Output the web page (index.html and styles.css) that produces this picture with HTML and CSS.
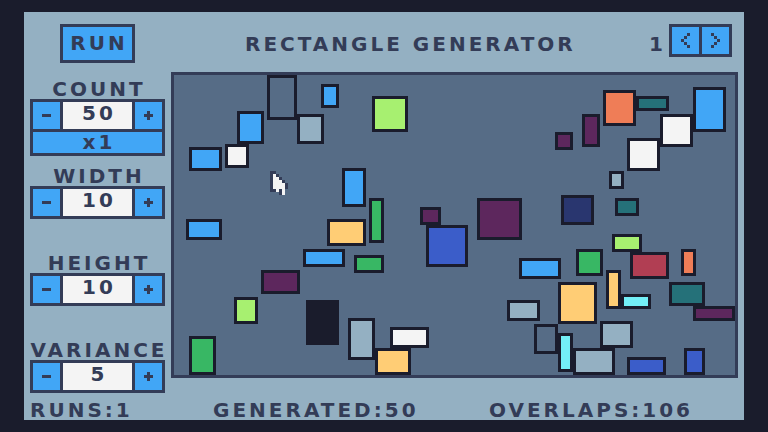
FILE: index.html
```html
<!DOCTYPE html>
<html lang="en">
<head>
<meta charset="utf-8">
<title>Rectangle Generator</title>
<link rel="stylesheet" href="styles.css">
</head>
<body>
<div class="screen">
  <header class="header">
    <button class="run">RUN</button>
    <h1 class="title">RECTANGLE GENERATOR</h1>
    <span class="page">1</span>
    <div class="nav">
      <button class="navbtn" aria-label="Previous">
        <svg width="9" height="15" viewBox="0 0 9 15" shape-rendering="crispEdges"><g fill="#333c57"><rect x="6" y="0" width="3" height="3"/><rect x="3" y="3" width="3" height="3"/><rect x="0" y="6" width="3" height="3"/><rect x="3" y="9" width="3" height="3"/><rect x="6" y="12" width="3" height="3"/></g></svg>
      </button>
      <button class="navbtn" aria-label="Next">
        <svg width="9" height="15" viewBox="0 0 9 15" shape-rendering="crispEdges"><g fill="#333c57"><rect x="0" y="0" width="3" height="3"/><rect x="3" y="3" width="3" height="3"/><rect x="6" y="6" width="3" height="3"/><rect x="3" y="9" width="3" height="3"/><rect x="0" y="12" width="3" height="3"/></g></svg>
      </button>
    </div>
  </header>

  <div class="main">
    <aside class="controls">
      <div class="group">
        <div class="label">COUNT</div>
        <div class="stepper">
          <button class="btn" aria-label="Decrease"><svg width="9" height="9" viewBox="0 0 9 9" shape-rendering="crispEdges"><rect x="0" y="3" width="9" height="3" fill="#333c57"/></svg></button>
          <div class="val">50</div>
          <button class="btn" aria-label="Increase"><svg width="9" height="9" viewBox="0 0 9 9" shape-rendering="crispEdges"><g fill="#333c57"><rect x="0" y="3" width="9" height="3"/><rect x="3" y="0" width="3" height="9"/></g></svg></button>
          <button class="mult">x1</button>
        </div>
      </div>
      <div class="group">
        <div class="label">WIDTH</div>
        <div class="stepper">
          <button class="btn" aria-label="Decrease"><svg width="9" height="9" viewBox="0 0 9 9" shape-rendering="crispEdges"><rect x="0" y="3" width="9" height="3" fill="#333c57"/></svg></button>
          <div class="val">10</div>
          <button class="btn" aria-label="Increase"><svg width="9" height="9" viewBox="0 0 9 9" shape-rendering="crispEdges"><g fill="#333c57"><rect x="0" y="3" width="9" height="3"/><rect x="3" y="0" width="3" height="9"/></g></svg></button>
        </div>
      </div>
      <div class="group">
        <div class="label">HEIGHT</div>
        <div class="stepper">
          <button class="btn" aria-label="Decrease"><svg width="9" height="9" viewBox="0 0 9 9" shape-rendering="crispEdges"><rect x="0" y="3" width="9" height="3" fill="#333c57"/></svg></button>
          <div class="val">10</div>
          <button class="btn" aria-label="Increase"><svg width="9" height="9" viewBox="0 0 9 9" shape-rendering="crispEdges"><g fill="#333c57"><rect x="0" y="3" width="9" height="3"/><rect x="3" y="0" width="3" height="9"/></g></svg></button>
        </div>
      </div>
      <div class="group">
        <div class="label">VARIANCE</div>
        <div class="stepper">
          <button class="btn" aria-label="Decrease"><svg width="9" height="9" viewBox="0 0 9 9" shape-rendering="crispEdges"><rect x="0" y="3" width="9" height="3" fill="#333c57"/></svg></button>
          <div class="val">5</div>
          <button class="btn" aria-label="Increase"><svg width="9" height="9" viewBox="0 0 9 9" shape-rendering="crispEdges"><g fill="#333c57"><rect x="0" y="3" width="9" height="3"/><rect x="3" y="0" width="3" height="9"/></g></svg></button>
        </div>
      </div>
    </aside>

    <section class="canvas">
      <div class="r c-gray" style="left:93px;top:0px;width:30px;height:45px"></div>
      <div class="r c-sky" style="left:147px;top:9px;width:18px;height:24px"></div>
      <div class="r c-silver" style="left:123px;top:39px;width:27px;height:30px"></div>
      <div class="r c-lime" style="left:198px;top:21px;width:36px;height:36px"></div>
      <div class="r c-sky" style="left:63px;top:36px;width:27px;height:33px"></div>
      <div class="r c-white" style="left:51px;top:69px;width:24px;height:24px"></div>
      <div class="r c-sky" style="left:15px;top:72px;width:33px;height:24px"></div>
      <div class="r c-sky" style="left:168px;top:93px;width:24px;height:39px"></div>
      <div class="r c-sky" style="left:12px;top:144px;width:36px;height:21px"></div>
      <div class="r c-yellow" style="left:153px;top:144px;width:39px;height:27px"></div>
      <div class="r c-sky" style="left:129px;top:174px;width:42px;height:18px"></div>
      <div class="r c-green" style="left:180px;top:180px;width:30px;height:18px"></div>
      <div class="r c-purple" style="left:87px;top:195px;width:39px;height:24px"></div>
      <div class="r c-lime" style="left:60px;top:222px;width:24px;height:27px"></div>
      <div class="r c-green" style="left:195px;top:123px;width:15px;height:45px"></div>
      <div class="r c-purple" style="left:246px;top:132px;width:21px;height:18px"></div>
      <div class="r c-blue" style="left:252px;top:150px;width:42px;height:42px"></div>
      <div class="r c-purple" style="left:303px;top:123px;width:45px;height:42px"></div>
      <div class="r c-sky" style="left:345px;top:183px;width:42px;height:21px"></div>
      <div class="r c-green" style="left:402px;top:174px;width:27px;height:27px"></div>
      <div class="r c-lime" style="left:438px;top:159px;width:30px;height:18px"></div>
      <div class="r c-red" style="left:456px;top:177px;width:39px;height:27px"></div>
      <div class="r c-orange" style="left:507px;top:174px;width:15px;height:27px"></div>
      <div class="r c-yellow" style="left:432px;top:195px;width:15px;height:39px"></div>
      <div class="r c-cyan" style="left:447px;top:219px;width:30px;height:15px"></div>
      <div class="r c-teal" style="left:495px;top:207px;width:36px;height:24px"></div>
      <div class="r c-purple" style="left:519px;top:231px;width:42px;height:15px"></div>
      <div class="r c-yellow" style="left:384px;top:207px;width:39px;height:42px"></div>
      <div class="r c-silver" style="left:333px;top:225px;width:33px;height:21px"></div>
      <div class="r c-white" style="left:486px;top:39px;width:33px;height:33px"></div>
      <div class="r c-white" style="left:453px;top:63px;width:33px;height:33px"></div>
      <div class="r c-silver" style="left:435px;top:96px;width:15px;height:18px"></div>
      <div class="r c-navy" style="left:387px;top:120px;width:33px;height:30px"></div>
      <div class="r c-teal" style="left:441px;top:123px;width:24px;height:18px"></div>
      <div class="r c-orange" style="left:429px;top:15px;width:33px;height:36px"></div>
      <div class="r c-teal" style="left:462px;top:21px;width:33px;height:15px"></div>
      <div class="r c-sky" style="left:519px;top:12px;width:33px;height:45px"></div>
      <div class="r c-purple" style="left:408px;top:39px;width:18px;height:33px"></div>
      <div class="r c-purple" style="left:381px;top:57px;width:18px;height:18px"></div>
      <div class="r c-gray" style="left:360px;top:249px;width:24px;height:30px"></div>
      <div class="r c-cyan" style="left:384px;top:258px;width:15px;height:39px"></div>
      <div class="r c-silver" style="left:399px;top:273px;width:42px;height:27px"></div>
      <div class="r c-silver" style="left:426px;top:246px;width:33px;height:27px"></div>
      <div class="r c-blue" style="left:453px;top:282px;width:39px;height:18px"></div>
      <div class="r c-blue" style="left:510px;top:273px;width:21px;height:27px"></div>
      <div class="r c-ink" style="left:132px;top:225px;width:33px;height:45px"></div>
      <div class="r c-silver" style="left:174px;top:243px;width:27px;height:42px"></div>
      <div class="r c-white" style="left:216px;top:252px;width:39px;height:21px"></div>
      <div class="r c-yellow" style="left:201px;top:273px;width:36px;height:27px"></div>
      <div class="r c-green" style="left:15px;top:261px;width:27px;height:39px"></div>

      <svg class="cursor" width="18" height="24" viewBox="0 0 6 8" shape-rendering="crispEdges">
        <g fill="#333c57">
          <rect x="0" y="0" width="1" height="7"/>
          <rect x="1" y="0" width="1" height="1"/>
          <rect x="2" y="1" width="1" height="1"/>
          <rect x="3" y="2" width="1" height="1"/>
          <rect x="4" y="3" width="1" height="1"/>
          <rect x="5" y="4" width="1" height="2"/>
          <rect x="1" y="6" width="1" height="1"/>
          <rect x="3" y="6" width="1" height="2"/>
        </g>
        <g fill="#f4f4f4">
          <rect x="1" y="1" width="1" height="5"/>
          <rect x="2" y="2" width="1" height="5"/>
          <rect x="3" y="3" width="1" height="3"/>
          <rect x="4" y="4" width="1" height="4"/>
        </g>
      </svg>
    </section>
  </div>

  <footer class="footer">
    <span>RUNS:1</span>
    <span>GENERATED:50</span>
    <span>OVERLAPS:106</span>
  </footer>
</div>
</body>
</html>
```

FILE: styles.css
```css
* {
  box-sizing: border-box;
  margin: 0;
  padding: 0;
}

html, body {
  width: 768px;
  height: 432px;
  overflow: hidden;
}

body {
  background: #1a1c2c;
  font-family: "DejaVu Sans", "Liberation Sans", sans-serif;
  font-weight: 700;
  font-size: 20px;
  line-height: 20px;
  color: #333c57;
}

button {
  font: inherit;
  color: inherit;
  border: none;
  background: none;
  padding: 0;
}

.screen {
  margin: 12px 24px;
  width: 720px;
  height: 408px;
  background: #94b0c2;
  padding: 0 6px;
  display: flex;
  flex-direction: column;
}

/* header */
.header {
  display: flex;
  align-items: flex-start;
  height: 60px;
  flex: none;
}

.run {
  margin: 12px 0 0 30px;
  width: 75px;
  height: 39px;
  border: 3px solid #333c57;
  background: #41a6f6;
  text-align: center;
  line-height: 33px;
  letter-spacing: 3px;
  padding-left: 3px;
}

.title {
  margin: 22px 0 0 110px;
  font-size: 20px;
  font-weight: 700;
  line-height: 20px;
  letter-spacing: 3px;
  white-space: nowrap;
}

.page {
  margin: 22px 6px 0 auto;
}

.nav {
  margin: 12px 6px 0 0;
  display: flex;
  gap: 3px;
  border: 3px solid #333c57;
  background: #333c57;
}

.navbtn {
  width: 27px;
  height: 27px;
  background: #41a6f6;
  display: flex;
  align-items: center;
  justify-content: center;
}

.navbtn svg,
.btn svg {
  display: block;
}

/* main */
.main {
  display: flex;
  align-items: flex-start;
  flex: none;
}

.controls {
  width: 135px;
  margin-right: 6px;
  padding-top: 7px;
  display: flex;
  flex-direction: column;
  flex: none;
}

.group {
  height: 87px;
  display: flex;
  flex-direction: column;
  align-items: center;
}

.group:last-child {
  height: auto;
}

.label {
  letter-spacing: 3px;
  padding-left: 3px;
  white-space: nowrap;
}

.stepper {
  width: 135px;
  display: grid;
  grid-template-columns: 27px 69px 27px;
  gap: 3px;
  border: 3px solid #333c57;
  background: #333c57;
}

.btn {
  height: 27px;
  background: #41a6f6;
  display: flex;
  align-items: center;
  justify-content: center;
}

.val {
  height: 27px;
  background: #f4f4f4;
  text-align: center;
  line-height: 23px;
  letter-spacing: 3px;
  padding-left: 3px;
}

.mult {
  grid-column: 1 / -1;
  height: 21px;
  background: #41a6f6;
  text-align: center;
  line-height: 21px;
  letter-spacing: 3px;
  padding-left: 3px;
}

/* canvas */
.canvas {
  position: relative;
  width: 567px;
  height: 306px;
  border: 3px solid #333c57;
  background: #566c86;
  flex: none;
}

.r {
  position: absolute;
  border: 3px solid #1a1c2c;
}

.c-gray { background: #566c86; }
.c-sky { background: #41a6f6; }
.c-silver { background: #94b0c2; }
.c-lime { background: #a7f070; }
.c-white { background: #f4f4f4; }
.c-yellow { background: #ffcd75; }
.c-green { background: #38b764; }
.c-purple { background: #5d275d; }
.c-blue { background: #3b5dc9; }
.c-navy { background: #29366f; }
.c-red { background: #b13e53; }
.c-orange { background: #ef7d57; }
.c-teal { background: #257179; }
.c-cyan { background: #73eff7; }
.c-ink { background: #1a1c2c; }

.cursor {
  position: absolute;
  left: 96px;
  top: 96px;
}

/* footer */
.footer {
  display: grid;
  grid-template-columns: 183px 276px 1fr;
  margin-top: 7px;
  letter-spacing: 3px;
  white-space: nowrap;
  flex: none;
}
```
